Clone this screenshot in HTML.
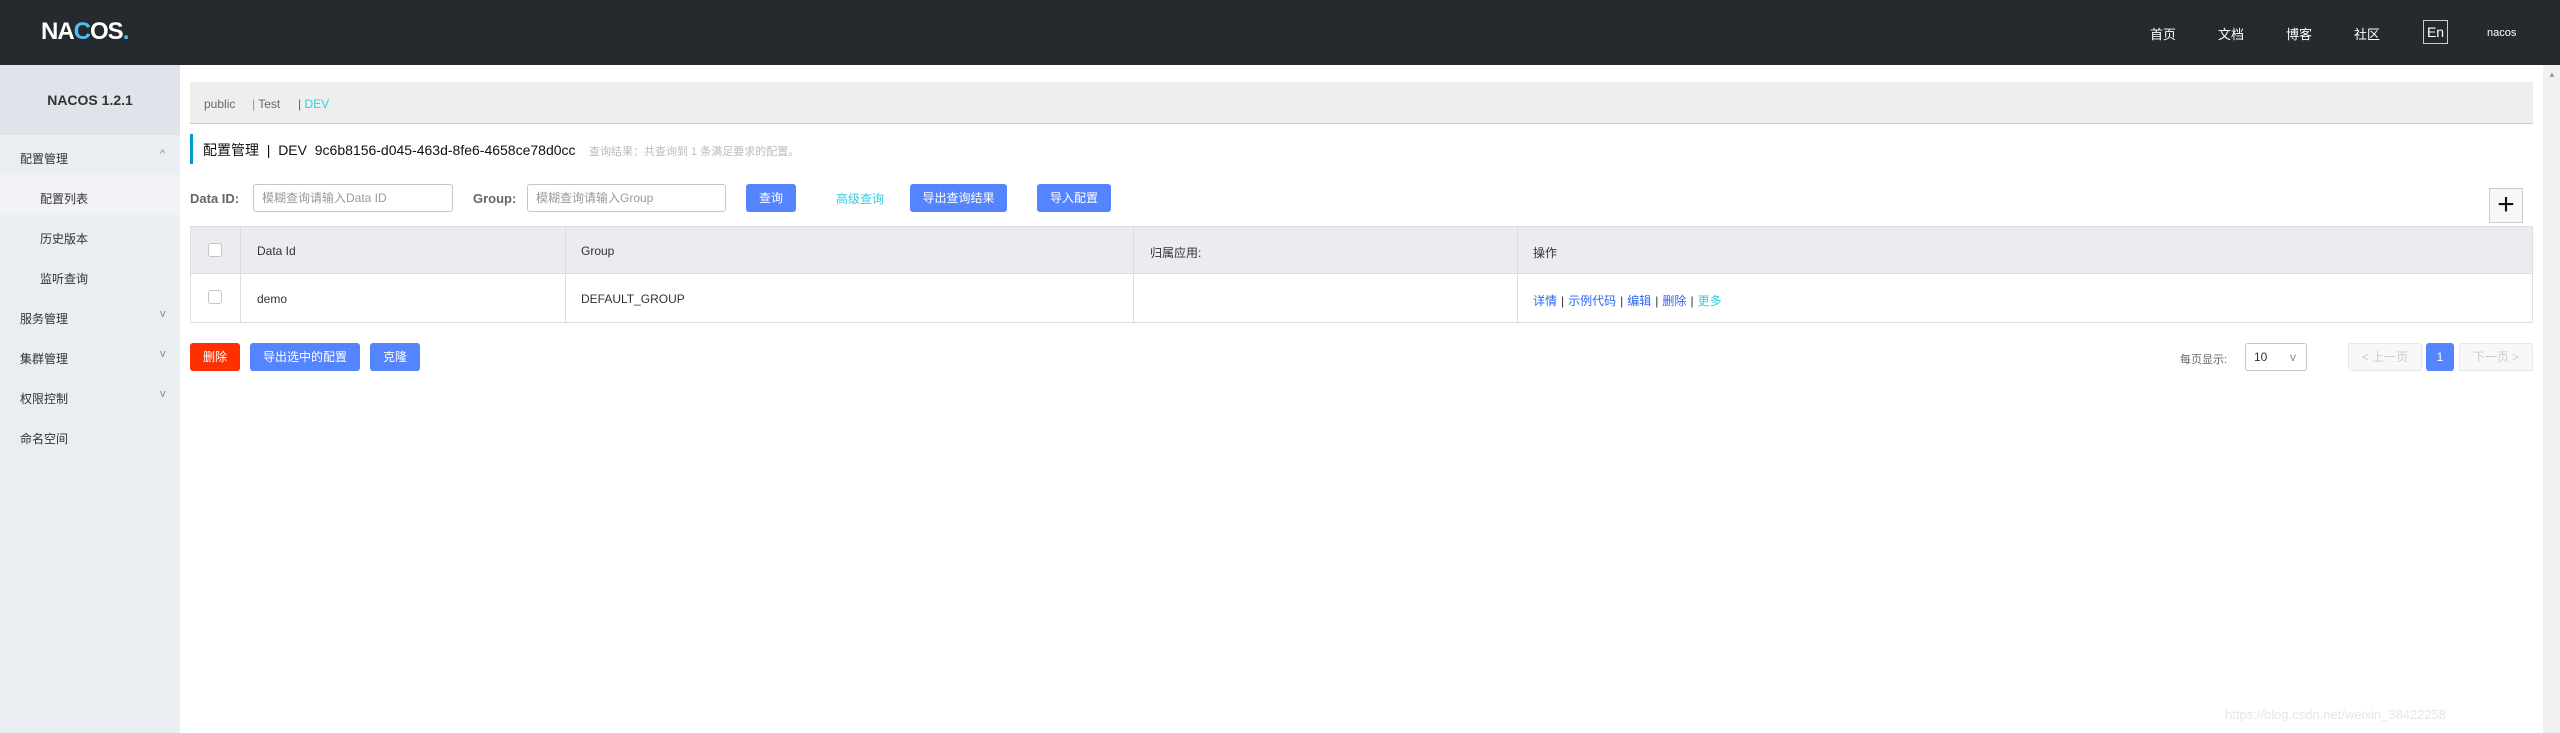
<!DOCTYPE html>
<html><head><meta charset="utf-8"><style>
*{box-sizing:border-box;margin:0;padding:0}
body{width:2560px;height:733px;overflow:hidden;font-family:"Liberation Sans","Noto Sans CJK SC",sans-serif;font-size:12px;color:#333;background:#fff;position:relative}
.a{position:absolute}
.hdr{left:0;top:0;width:2560px;height:65px;background:#252a2f}
.side{left:0;top:65px;width:180px;height:668px;background:#eaedf1}
.btn{position:absolute;height:28px;line-height:28px;color:#fff;background:#5584ff;border-radius:3px;text-align:center;font-size:12px}
.inp{position:absolute;height:28px;border:1px solid #c4c6cf;border-radius:3px;color:#999;line-height:26px;padding-left:8px;font-size:12px}
.nav{color:#fff;font-size:13px;top:24px}
.mi{left:20px;font-size:12px;color:#333}
.si{left:40px;font-size:12px;color:#333}
.arr{left:160px;color:#888;font-size:11px}
.cb{position:absolute;width:14px;height:14px;border:1px solid #c4c6cf;border-radius:3px;background:#fff}
.lk{color:#2a66f2}
.sep{color:#333;margin:0 4px}
</style></head><body>
<div class="a hdr"></div>
<div class="a" style="left:41px;top:18px;color:#fff;font-size:24px;font-weight:bold;letter-spacing:-1px">NA<span style="color:#4fc0f0">C</span>OS<span style="color:#4fc0f0">.</span></div>
<div class="a nav" style="left:2150px">首页</div>
<div class="a nav" style="left:2218px">文档</div>
<div class="a nav" style="left:2286px">博客</div>
<div class="a nav" style="left:2354px">社区</div>
<div class="a" style="left:2423px;top:20px;width:25px;height:24px;border:1px solid #ccc;color:#fff;font-size:14px;text-align:center;line-height:22px">En</div>
<div class="a" style="left:2487px;top:27px;color:#fff;font-size:11px">nacos</div>

<div class="a side"></div>
<div class="a" style="left:0;top:65px;width:180px;height:70px;background:#dfe3ea"></div>
<div class="a" style="left:0;top:92px;width:180px;text-align:center;font-weight:bold;font-size:14px;color:#333">NACOS 1.2.1</div>
<div class="a" style="left:0;top:175px;width:180px;height:40px;background:#f2f3f7"></div>
<div class="a mi" style="top:150px">配置管理</div><div class="a arr" style="top:148px">^</div>
<div class="a si" style="top:190px">配置列表</div>
<div class="a si" style="top:230px">历史版本</div>
<div class="a si" style="top:270px">监听查询</div>
<div class="a mi" style="top:310px">服务管理</div><div class="a arr" style="top:308px">v</div>
<div class="a mi" style="top:350px">集群管理</div><div class="a arr" style="top:348px">v</div>
<div class="a mi" style="top:390px">权限控制</div><div class="a arr" style="top:388px">v</div>
<div class="a mi" style="top:430px">命名空间</div>

<div class="a" style="left:190px;top:82px;width:2343px;height:42px;background:#eee;border-bottom:1px solid #ccc"></div>
<div class="a" style="left:204px;top:97px;font-size:12px;color:#666">public</div>
<div class="a" style="left:252px;top:97px;font-size:12px;color:#666"><span style="color:#999">|</span> Test</div>
<div class="a" style="left:298px;top:97px;font-size:12px;color:#33cde5"><span style="color:#c33">|</span> DEV</div>

<div class="a" style="left:190px;top:134px;width:3px;height:30px;background:#09c"></div>
<div class="a" style="left:203px;top:140px;font-size:14px;color:#111">配置管理 &nbsp;|&nbsp; DEV &nbsp;9c6b8156-d045-463d-8fe6-4658ce78d0cc</div>
<div class="a" style="left:589px;top:143px;font-size:11px;color:#bbb">查询结果：共查询到 1 条满足要求的配置。</div>

<div class="a" style="left:190px;top:191px;font-weight:bold;color:#666;font-size:13px">Data ID:</div>
<div class="inp" style="left:253px;top:184px;width:200px">模糊查询请输入Data ID</div>
<div class="a" style="left:473px;top:191px;font-weight:bold;color:#666;font-size:13px">Group:</div>
<div class="inp" style="left:527px;top:184px;width:199px">模糊查询请输入Group</div>
<div class="btn" style="left:746px;top:184px;width:50px">查询</div>
<div class="a" style="left:836px;top:190px;color:#33cde5">高级查询</div>
<div class="btn" style="left:910px;top:184px;width:97px">导出查询结果</div>
<div class="btn" style="left:1037px;top:184px;width:74px">导入配置</div>
<div class="a" style="left:2489px;top:188px;width:34px;height:35px;border:1px solid #ccc;background:#f7f7f7;text-align:center;line-height:32px;font-size:30px;color:#111">+</div>

<div class="a" style="left:190px;top:226px;width:2343px;height:97px;border:1px solid #dcdee3"></div>
<div class="a" style="left:191px;top:227px;width:2341px;height:47px;background:#ebecf0;border-bottom:1px solid #dcdee3"></div>
<div class="a" style="left:240px;top:227px;width:1px;height:95px;background:#dcdee3"></div>
<div class="a" style="left:565px;top:227px;width:1px;height:95px;background:#dcdee3"></div>
<div class="a" style="left:1133px;top:227px;width:1px;height:95px;background:#dcdee3"></div>
<div class="a" style="left:1517px;top:227px;width:1px;height:95px;background:#dcdee3"></div>
<div class="cb" style="left:208px;top:243px"></div>
<div class="cb" style="left:208px;top:290px"></div>
<div class="a" style="left:257px;top:244px">Data Id</div>
<div class="a" style="left:581px;top:244px">Group</div>
<div class="a" style="left:1150px;top:244px">归属应用:</div>
<div class="a" style="left:1533px;top:244px">操作</div>
<div class="a" style="left:257px;top:292px">demo</div>
<div class="a" style="left:581px;top:292px">DEFAULT_GROUP</div>
<div class="a" style="left:1533px;top:292px"><span class="lk">详情</span><span class="sep">|</span><span class="lk">示例代码</span><span class="sep">|</span><span class="lk">编辑</span><span class="sep">|</span><span class="lk">删除</span><span class="sep">|</span><span style="color:#33cde5">更多</span></div>

<div class="btn" style="left:190px;top:343px;width:50px;background:#ff3000">删除</div>
<div class="btn" style="left:250px;top:343px;width:110px">导出选中的配置</div>
<div class="btn" style="left:370px;top:343px;width:50px">克隆</div>

<div class="a" style="left:2180px;top:351px;color:#666;font-size:11px">每页显示:</div>
<div class="a" style="left:2245px;top:343px;width:62px;height:28px;border:1px solid #c4c6cf;border-radius:3px;line-height:26px;padding-left:8px">10<span style="position:absolute;left:44px;color:#888">v</span></div>
<div class="a" style="left:2348px;top:343px;width:74px;height:28px;border:1px solid #e6e7eb;background:#f7f8fa;border-radius:3px;color:#ccc;text-align:center;line-height:26px">&lt; 上一页</div>
<div class="btn" style="left:2426px;top:343px;width:28px">1</div>
<div class="a" style="left:2459px;top:343px;width:74px;height:28px;border:1px solid #e6e7eb;background:#f7f8fa;border-radius:3px;color:#ccc;text-align:center;line-height:26px">下一页 &gt;</div>

<div class="a" style="left:2543px;top:65px;width:17px;height:668px;background:#f1f1f1"></div>
<div class="a" style="left:2548px;top:70px;color:#999;font-size:8px">▲</div>
<div class="a" style="left:2225px;top:707px;color:#e6e6e6;font-size:13px">https://blog.csdn.net/weixin_38422258</div>
</body></html>
